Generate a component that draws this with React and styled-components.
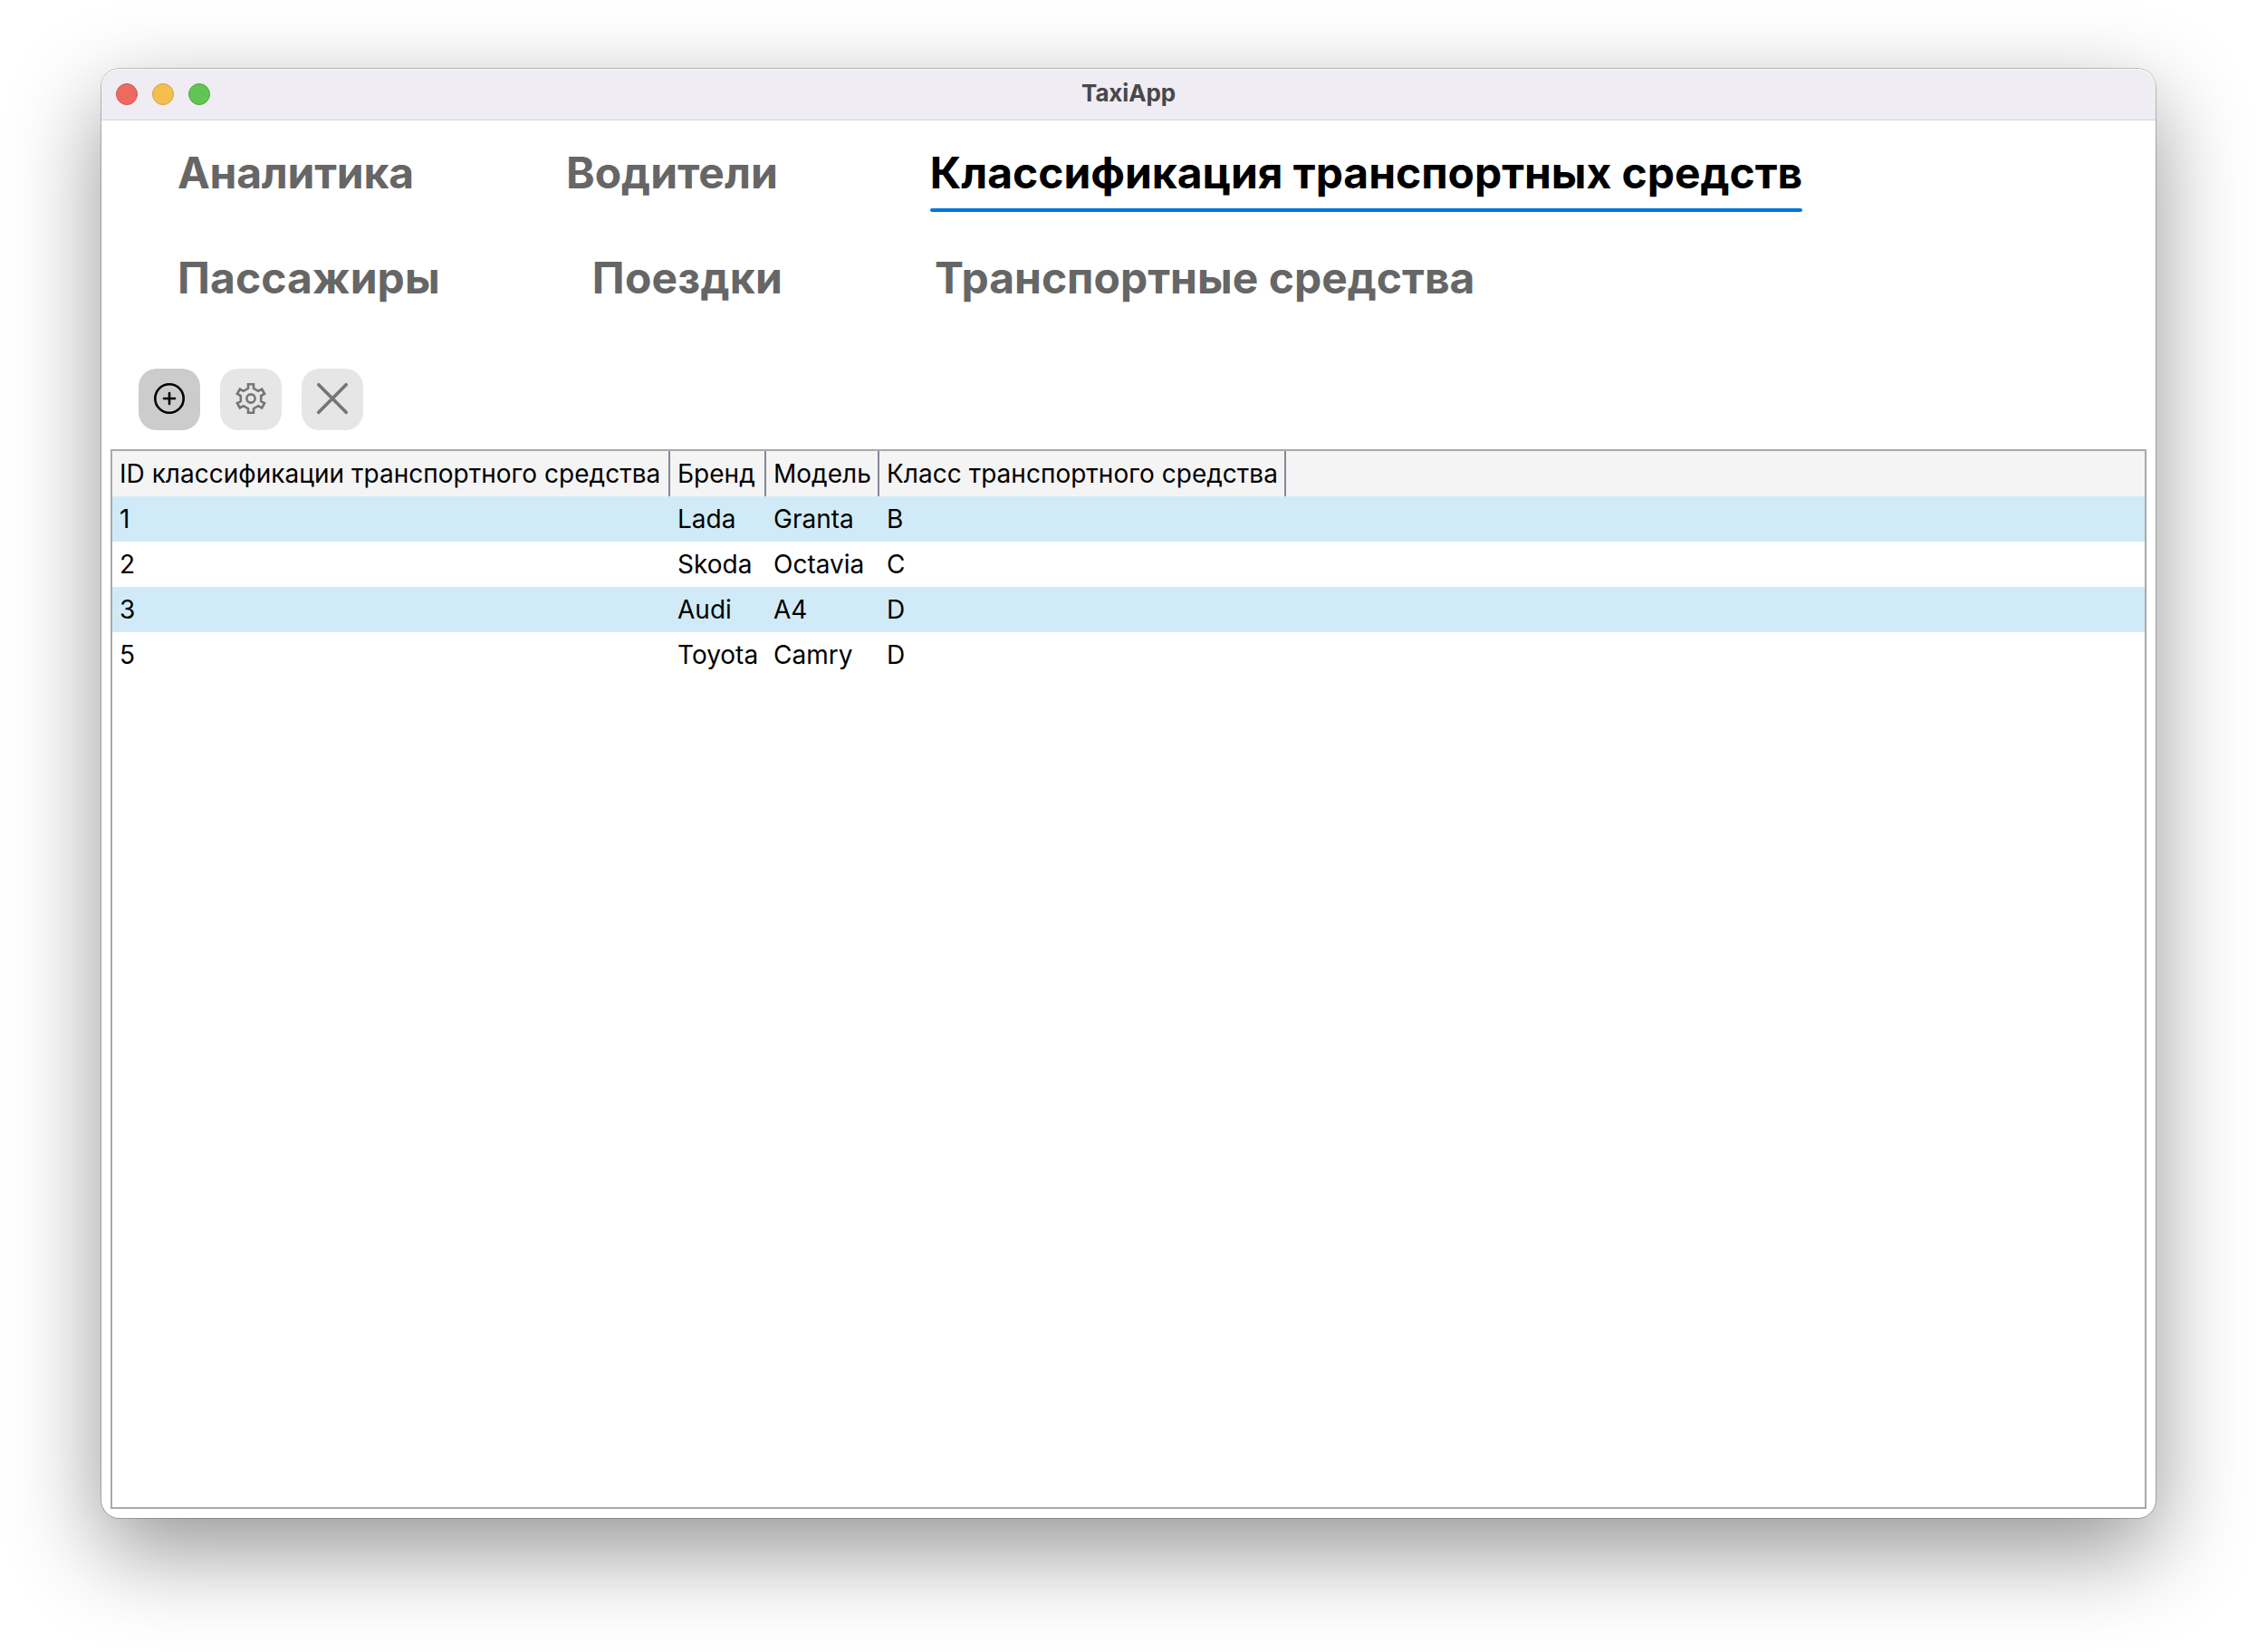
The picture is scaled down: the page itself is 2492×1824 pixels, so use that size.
import React from 'react';
import styled, { createGlobalStyle } from 'styled-components';

const GlobalStyle = createGlobalStyle`
  * { box-sizing: border-box; }
  body { margin: 0; background: #fff; font-family: Inter, "Liberation Sans", sans-serif; }
`;

const Desktop = styled.div`
  width: 2492px;
  height: 1824px;
  padding: 76px 112px 148px;
  overflow: hidden;
`;

const AppWindow = styled.div`
  display: flex;
  flex-direction: column;
  height: 1600px;
  border-radius: 20px;
  background: #fff;
  box-shadow: 0 0 0 1px rgba(0, 0, 0, 0.22), 0 36px 100px rgba(0, 0, 0, 0.42);
`;

const TitleBar = styled.header`
  display: grid;
  grid-template-columns: 1fr auto 1fr;
  align-items: center;
  flex: none;
  height: 57px;
  padding: 0 16px;
  border-radius: 20px 20px 0 0;
  background: #efecf4;
  border-bottom: 1px solid #d6d5d9;
  box-shadow: inset 0 1px 0 #fbfafc;
`;

const Lights = styled.div`
  display: flex;
  gap: 16px;
`;

const Light = styled.span`
  width: 24px;
  height: 24px;
  border-radius: 50%;
  background: ${(p) => p.$fill};
  border: 1px solid ${(p) => p.$edge};
`;

const Title = styled.h1`
  margin: 0;
  padding-bottom: 2px;
  font-size: 26px;
  line-height: 32px;
  letter-spacing: -0.15px;
  font-weight: 700;
  color: #48474a;
`;

const Tabs = styled.nav`
  display: flex;
  flex-wrap: wrap;
  flex: none;
  margin-top: -1px;
`;

const Tab = styled.button`
  display: flex;
  align-items: center;
  height: 116px;
  padding: 2px 84px 0;
  border: 0;
  background: none;
  font: 700 48px/58px Inter, "Liberation Sans", sans-serif;
  letter-spacing: ${(p) => p.$tracking}px;
  color: ${(p) => (p.$active ? '#000' : '#666')};
`;

const TabLabel = styled.span`
  position: relative;
  white-space: nowrap;
`;

const Underline = styled.span`
  position: absolute;
  left: 0;
  right: 0;
  bottom: -14px;
  height: 4px;
  border-radius: 2px;
  background: #0078d7;
`;

const Toolbar = styled.div`
  display: flex;
  flex: none;
  gap: 22px;
  padding: 43px 41px 21px;
`;

const ToolButton = styled.button`
  display: flex;
  align-items: center;
  justify-content: center;
  width: 68px;
  height: 68px;
  padding: 0 0 2px;
  border: 0;
  border-radius: 20px;
  background: ${(p) => (p.$enabled ? '#ccc' : '#e6e6e6')};
  color: ${(p) => (p.$enabled ? '#000' : '#757575')};
`;

const Icon = styled.svg`
  width: 34px;
  height: 34px;
  fill: none;
  stroke: currentColor;
  stroke-width: ${(p) => p.$weight}px;
  overflow: visible;
`;

const Grid = styled.div`
  flex: 1;
  margin: 0 10px 10px;
  border: 2px solid #a9a9a9;
  font-size: 28px;
  line-height: 34px;
  color: #000;
`;

const Row = styled.div`
  display: grid;
  grid-template-columns: 616px 106px 125px 449px 1fr;
  height: 50px;
  background: ${(p) => p.$fill || '#fff'};
`;

const Cell = styled.div`
  display: flex;
  align-items: center;
  padding-left: 8px;
  white-space: nowrap;
`;

const HeadCell = styled(Cell)`
  border-right: 2px solid #84889a;
  letter-spacing: 0.02px;
`;

const tabs = [
  { label: 'Аналитика', tracking: -0.24 },
  { label: 'Водители', tracking: 0 },
  { label: 'Классификация транспортных средств', tracking: -0.05, active: true },
  { label: 'Пассажиры', tracking: 0.1 },
  { label: 'Поездки', tracking: 0.22 },
  { label: 'Транспортные средства', tracking: 0 },
];
const columns = [
  'ID классификации транспортного средства',
  'Бренд',
  'Модель',
  'Класс транспортного средства',
];
const vehicles = [
  ['1', 'Lada', 'Granta', 'B'],
  ['2', 'Skoda', 'Octavia', 'C'],
  ['3', 'Audi', 'A4', 'D'],
  ['5', 'Toyota', 'Camry', 'D'],
];

// One tooth pointing up, repeated every 60 degrees around the hub.
const tooth = [[-3, -11.2], [-3, -15.7], [3, -15.7], [3, -11.2]];
const gearPoints = [0, 60, 120, 180, 240, 300]
  .flatMap((deg) => {
    const a = (deg * Math.PI) / 180;
    return tooth.map(([x, y]) => [
      17 + x * Math.cos(a) - y * Math.sin(a),
      17 + x * Math.sin(a) + y * Math.cos(a),
    ]);
  })
  .map((p) => p.map((n) => n.toFixed(2)).join(','))
  .join(' ');

const PlusIcon = () => (
  <Icon viewBox="0 0 34 34" $weight={2.6} strokeLinecap="round">
    <circle cx="17" cy="17" r="15.7" />
    <path d="M17 11v12M11 17h12" />
  </Icon>
);
const GearIcon = () => (
  <Icon viewBox="0 0 34 34" $weight={2.6}>
    <polygon points={gearPoints} />
    <circle cx="17" cy="17" r="4.6" />
  </Icon>
);
const CloseIcon = () => (
  <Icon viewBox="0 0 34 34" $weight={3.7} strokeLinecap="round">
    <path d="M1.8 1.8l30.4 30.4M32.2 1.8L1.8 32.2" />
  </Icon>
);

export default function App() {
  return (
    <Desktop>
      <GlobalStyle />
      <AppWindow>
        <TitleBar>
          <Lights>
            <Light $fill="#ec6a5e" $edge="#d5574b" />
            <Light $fill="#f4bf4f" $edge="#d8a13c" />
            <Light $fill="#61c554" $edge="#4fa73e" />
          </Lights>
          <Title>TaxiApp</Title>
        </TitleBar>
        <Tabs>
          {tabs.map(({ label, tracking, active }) => (
            <Tab key={label} $active={active} $tracking={tracking}>
              <TabLabel>
                {label}
                {active && <Underline />}
              </TabLabel>
            </Tab>
          ))}
        </Tabs>
        <Toolbar>
          <ToolButton $enabled aria-label="Добавить"><PlusIcon /></ToolButton>
          <ToolButton disabled aria-label="Изменить"><GearIcon /></ToolButton>
          <ToolButton disabled aria-label="Удалить"><CloseIcon /></ToolButton>
        </Toolbar>
        <Grid>
          <Row $fill="#f4f4f4">
            {columns.map((c) => <HeadCell key={c}>{c}</HeadCell>)}
          </Row>
          {vehicles.map((v, i) => (
            <Row key={v[0]} $fill={i % 2 === 0 ? '#d0ebf7' : '#fff'}>
              {v.map((t, j) => <Cell key={j}>{t}</Cell>)}
            </Row>
          ))}
        </Grid>
      </AppWindow>
    </Desktop>
  );
}
